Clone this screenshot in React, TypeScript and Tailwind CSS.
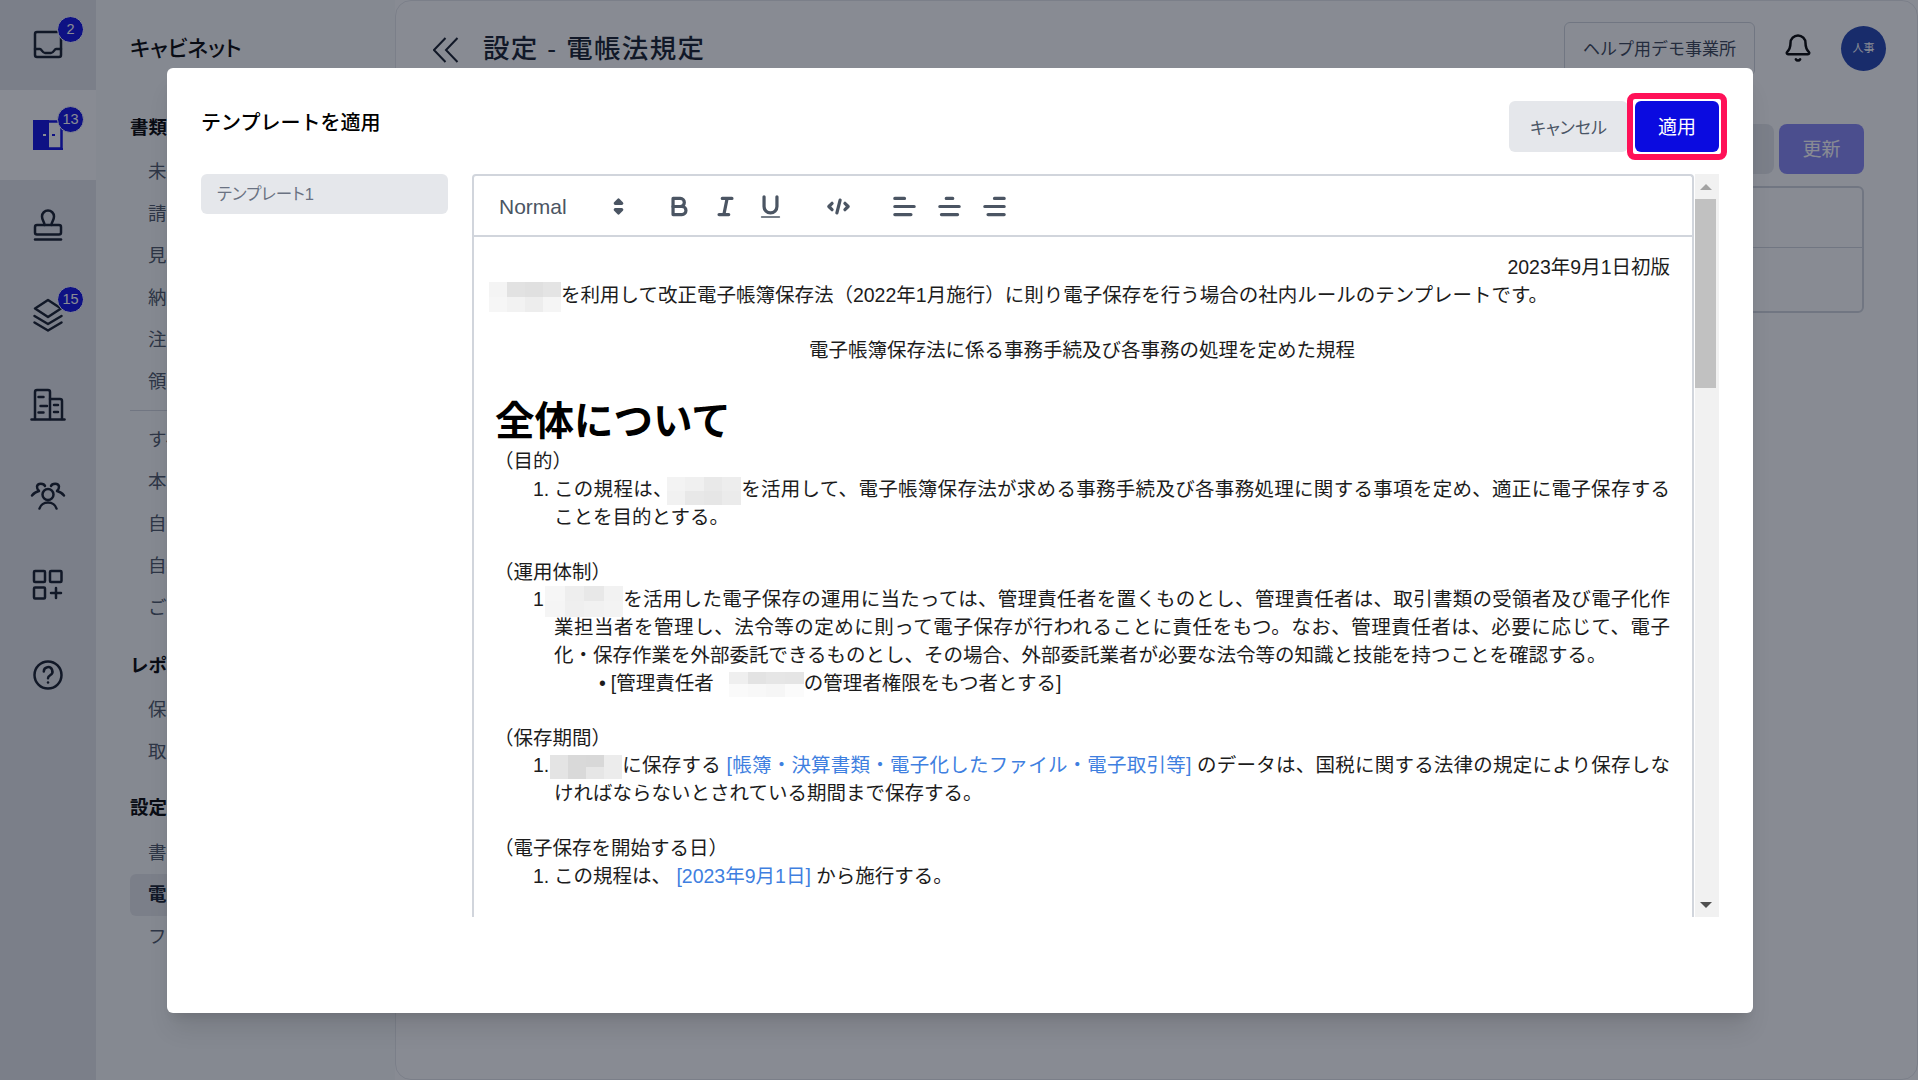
import type { ReactNode } from "react";
import { Bell } from "lucide-react";

const icon = "fill-none stroke-[#111827] stroke-[2.5] [stroke-linecap:round] [stroke-linejoin:round]";

function Inbox() {
  return (
    <svg viewBox="0 0 36 36" className={`w-9 h-9 ${icon}`}>
      <rect x="5" y="5" width="26" height="25" rx="2" />
      <path d="M5 22h5c1.5 0 2.5 4 5 4h6c2.5 0 3.5-4 5-4h5" />
    </svg>
  );
}

function Door() {
  return (
    <svg viewBox="0 0 36 36" className="w-9 h-9">
      <rect x="3" y="3" width="16" height="30" className="fill-[#0b0be0]" />
      <path d="M19 4.5h12.5v27H19" className="fill-none stroke-[#0b0be0] stroke-[2.5]" />
      <rect x="3" y="31" width="30" height="2" className="fill-[#0b0be0]" />
      <rect x="13" y="17" width="3" height="2" className="fill-white" />
      <rect x="22" y="17" width="3" height="2" className="fill-[#0b0be0]" />
    </svg>
  );
}

function StampIcon() {
  return (
    <svg viewBox="0 0 36 36" className={`w-9 h-9 ${icon}`}>
      <path d="M14.5 18c0-3.500-2.500-4.500-2.500-8.500a6 6 0 0 1 12 0c0 4-2.500 5-2.500 8.500" />
      <rect x="5" y="18" width="26" height="9.500" rx="2" />
      <path d="M5 32.500h26" />
    </svg>
  );
}

function LayersIcon() {
  return (
    <svg viewBox="0 0 36 36" className={`w-9 h-9 ${icon}`}>
      <path d="M18 3l13 8.500-13 8.500-13-8.500z" />
      <path d="M4.500 19l13.500 8 13.500-8" />
      <path d="M4.500 25.500l13.500 8 13.500-8" />
    </svg>
  );
}

function BuildingIcon() {
  return (
    <svg viewBox="0 0 36 36" className={`w-9 h-9 ${icon}`}>
      <path d="M1.500 32.500h33" />
      <path d="M5 32V5a2 2 0 0 1 2-2h11a2 2 0 0 1 2 2v27" />
      <path d="M20 12h10a2 2 0 0 1 2 2v18" />
      <path d="M8.500 10h5M10.500 19h6.500M8.500 25.500h5M24 18h4M24 25h4" />
    </svg>
  );
}

function UsersIcon() {
  return (
    <svg viewBox="0 0 36 36" className={`w-9 h-9 ${icon}`}>
      <circle cx="18" cy="17.500" r="5.500" />
      <path d="M9.500 31.500c1-3.500 4.500-6 8.500-6s7.500 2.500 8.500 6" />
      <path d="M15 9c-1-3-7.500-3.500-8 .5-.2 1.800.8 3.300 2 4.500-2.500.5-5 2-7 4.500" />
      <path d="M21 9c1-3 7.500-3.500 8 .5.2 1.800-.8 3.300-2 4.500 2.500.5 5 2 7 4.500" />
    </svg>
  );
}

function GridPlusIcon() {
  return (
    <svg viewBox="0 0 36 36" className={`w-9 h-9 ${icon}`}>
      <rect x="4" y="4" width="11" height="11" rx="1" />
      <rect x="20" y="4" width="11.500" height="11" rx="1" />
      <rect x="4" y="20.500" width="11" height="11" rx="1" />
      <path d="M26 21v10M21 26h10" />
    </svg>
  );
}

function HelpIcon() {
  return (
    <svg viewBox="0 0 36 36" className={`w-9 h-9 ${icon}`}>
      <circle cx="18" cy="18" r="13.500" />
      <path d="M13.800 14.500a4.300 4.300 0 1 1 6.400 3.700c-1.500.9-2.200 1.500-2.200 3" />
      <path d="M18 25.500v.1" />
    </svg>
  );
}

const railItems = [
  { node: <Inbox />, badge: "2" },
  { node: <Door />, badge: "13", active: true },
  { node: <StampIcon /> },
  { node: <LayersIcon />, badge: "15" },
  { node: <BuildingIcon /> },
  { node: <UsersIcon /> },
  { node: <GridPlusIcon /> },
  { node: <HelpIcon /> },
];

function Rail() {
  return (
    <div className="w-24 shrink-0 h-full bg-gray-200">
      {railItems.map((item, i) => (
        <div key={i} className={`h-[90px] flex items-center justify-center ${item.active ? "bg-white" : ""}`}>
          <div className="relative w-9 h-9">
            {item.node}
            {item.badge && (
              <span className="absolute left-[27px] -top-[11px] w-[27px] h-[27px] rounded-full bg-[#0b0be0] border border-white flex items-center justify-center text-white text-[14.500px]">
                {item.badge}
              </span>
            )}
          </div>
        </div>
      ))}
    </div>
  );
}

function CabItem({ children, active }: { children: ReactNode; active?: boolean }) {
  return (
    <div className={`h-[42px] flex items-center pl-[18px] text-[18.500px] rounded-md ${active ? "bg-gray-200 text-gray-900 font-bold" : "text-gray-600"}`}>
      {children}
    </div>
  );
}

function CabHead({ children, className }: { children: ReactNode; className: string }) {
  return <div className={`h-10 flex items-center text-[18.500px] font-bold text-black ${className}`}>{children}</div>;
}

function Cabinet() {
  return (
    <div className="w-[299px] shrink-0 h-full bg-gray-50 pt-6 pl-[34px] pr-4">
      <div className="h-12 pt-[2px] flex items-center text-[21.500px] font-medium text-black [font-feature-settings:'palt']">キャビネット</div>
      <CabHead className="mt-9">書類</CabHead>
      <div className="mt-[3px]">
        {["未処理", "請求書", "見積書", "納品書", "注文書", "領収書"].map((t) => (
          <CabItem key={t}>{t}</CabItem>
        ))}
      </div>
      <div className="border-t border-gray-300 mt-[7px] mb-2" />
      {["すべて", "本部", "自分", "自社", "ごみ箱"].map((t) => (
        <CabItem key={t}>{t}</CabItem>
      ))}
      <CabHead className="mt-[17px]">レポート</CabHead>
      <div className="mt-[3px]">
        <CabItem>保存状況</CabItem>
        <CabItem>取引先</CabItem>
      </div>
      <CabHead className="mt-[15px]">設定</CabHead>
      <div className="mt-1">
        <CabItem>書類種別</CabItem>
        <CabItem active>電帳法規定</CabItem>
        <CabItem>ファイル</CabItem>
      </div>
    </div>
  );
}

function MainPanel() {
  return (
    <div className="flex-1 min-w-0 h-full bg-white rounded-2xl border border-gray-200 pr-[31px]">
      <div className="h-[94px] flex items-center justify-between pl-[37px]">
        <div className="flex items-center gap-[24px] pt-[3px]">
          <svg viewBox="0 0 26 26" className="w-[26px] h-[26px] fill-none stroke-[#111827] stroke-[2]">
            <path d="M12.500 1L1 13l11.500 12M24.500 1L13 13l11.500 12" />
          </svg>
          <h1 className="text-[26.500px] font-medium tracking-[0.05em] text-gray-900">設定 - 電帳法規定</h1>
        </div>
        <div className="flex items-center gap-7">
          <div className="h-[54px] mt-[2px] px-[18px] pt-[2px] flex items-center border border-gray-300 rounded-md text-[17px] text-gray-700">ヘルプ用デモ事業所</div>
          <Bell size={30} strokeWidth={2} className="text-black" />
          <div className="w-[45px] h-[45px] rounded-full bg-[#1e40af] flex items-center justify-center text-white text-[11px]">人事</div>
        </div>
      </div>
      <div className="pr-[22px] pt-[29px]">
        <div className="flex justify-end gap-[5px]">
          <div className="w-[120px] h-[50px] rounded-lg bg-gray-200" />
          <div className="w-[85px] h-[50px] pt-[2px] rounded-lg bg-[#8585f5] flex items-center justify-center text-white text-[19px]">更新</div>
        </div>
        <div className="mt-3 h-[127px] border-2 border-gray-300 rounded-md">
          <div className="h-[60px] border-b border-gray-300" />
        </div>
      </div>
    </div>
  );
}

function QlIcon({ children }: { children: ReactNode }) {
  return (
    <svg viewBox="0 0 18 18" className="w-[29px] h-[29px] fill-none stroke-[#4b5563] stroke-2 [stroke-linecap:round] [stroke-linejoin:round]">
      {children}
    </svg>
  );
}

function Toolbar() {
  return (
    <div className="h-[61px] shrink-0 border-b-2 border-gray-300 flex items-center pl-[25px] pt-[2px]">
      <div className="w-[105px] text-[21px] text-[#4b5563]">Normal</div>
      <QlIcon>
        <polygon points="7 11 9 13 11 11 7 11" />
        <polygon points="7 7 9 5 11 7 7 7" />
      </QlIcon>
      <div className="ml-[32px] flex gap-[16.500px]">
        <QlIcon>
          <path d="M5,4H9.5A2.5,2.5,0,0,1,12,6.500v0A2.5,2.500,0,0,1,9.5,9H5V4Z" />
          <path d="M5,9h5.500A2.500,2.500,0,0,1,13,11.500v0A2.500,2.500,0,0,1,10.500,14H5V9Z" />
        </QlIcon>
        <QlIcon>
          <path d="M7 4h6M5 14h6M8 14l2-10" />
        </QlIcon>
        <QlIcon>
          <path d="M5,3V9a4,4,0,0,0,4,4h0a4,4,0,0,0,4-4V3" />
          <rect x="3" y="15" width="12" height="1" rx=".5" className="fill-[#4b5563] stroke-none" />
        </QlIcon>
      </div>
      <div className="ml-[39px]">
        <QlIcon>
          <path d="M5 7L3 9l2 2M13 7l2 2-2 2M10 5L8 13" />
        </QlIcon>
      </div>
      <div className="ml-[37px] flex gap-4">
        <QlIcon>
          <path d="M3 9h12M3 14h10M3 4h6" />
        </QlIcon>
        <QlIcon>
          <path d="M3 9h12M14 14H4M11 4H7" />
        </QlIcon>
        <QlIcon>
          <path d="M15 9H3M15 14H5M15 4H9" />
        </QlIcon>
      </div>
    </div>
  );
}

// 個人情報のモザイク部分
function Mosaic({ className, cells }: { className: string; cells: string[] }) {
  return (
    <span className={`inline-grid grid-cols-4 grid-rows-2 align-middle -my-2 ${className}`}>
      {cells.map((c, i) => (
        <span key={i} className={c} />
      ))}
    </span>
  );
}

function Step({ children }: { children: ReactNode }) {
  return (
    <div className="flex pl-[44px]">
      <span className="w-[21px] shrink-0">1.</span>
      <div className="flex-1 min-w-0 text-justify">{children}</div>
    </div>
  );
}

const Link = ({ children }: { children: ReactNode }) => <span className="text-[#3f7fe0]">{children}</span>;

function Doc() {
  return (
    <div className="flex-1 overflow-hidden pt-[17px] pl-[15px] pr-[22px] text-[19.500px] leading-[27.700px] text-[#1c1c1c]">
      <div className="text-right">2023年9月1日初版</div>
      <div>
        <Mosaic className="w-[72px] h-[30px]" cells={["bg-[#f4f4f4]", "bg-[#e2e2e2]", "bg-[#e0e0e0]", "bg-[#e4e4e4]", "bg-[#f6f6f6]", "bg-[#f2f2f2]", "bg-[#ededed]", "bg-[#f5f5f5]"]} />
        を利用して改正電子帳簿保存法（2022年1月施行）に則り電子保存を行う場合の社内ルールのテンプレートです。
      </div>
      <div className="h-7" />
      <div className="text-center pl-[5px]">電子帳簿保存法に係る事務手続及び各事務の処理を定めた規程</div>
      <h2 className="mt-[29px] pl-[6px] text-[39.500px] leading-[54px] font-bold text-black">全体について</h2>
      <div className="pl-[5px]">（目的）</div>
      <Step>
        この規程は、
        <Mosaic className="w-[74px] h-[28px] -ml-[6px]" cells={["bg-[#f3f3f3]", "bg-[#f0f0f0]", "bg-[#e9e9e9]", "bg-[#ededed]", "bg-[#f1f1f1]", "bg-[#e8e8e8]", "bg-[#e6e6e6]", "bg-[#ebebeb]"]} />
        を活用して、電子帳簿保存法が求める事務手続及び各事務処理に関する事項を定め、適正に電子保存することを目的とする。
      </Step>
      <div className="h-[27.500px]" />
      <div className="pl-[5px]">（運用体制）</div>
      <Step>
        <Mosaic className="w-[78px] h-[31px] -ml-[9px]" cells={["bg-[#f6f6f6]", "bg-[#eeeeee]", "bg-[#e8e8e8]", "bg-[#f2f2f2]", "bg-[#f5f5f5]", "bg-[#efefef]", "bg-[#f1f1f1]", "bg-[#f3f3f3]"]} />
        を活用した電子保存の運用に当たっては、管理責任者を置くものとし、管理責任者は、取引書類の受領者及び電子化作業担当者を管理し、法令等の定めに則って電子保存が行われることに責任をもつ。なお、管理責任者は、必要に応じて、電子化・保存作業を外部委託できるものとし、その場合、外部委託業者が必要な法令等の知識と技能を持つことを確認する。
      </Step>
      <div className="pl-[110px]">
        •<span className="ml-[5px]">[管理責任者</span>
        <Mosaic className="w-[75px] h-[25px] ml-[15px]" cells={["bg-[#efefef]", "bg-[#e3e3e3]", "bg-[#e6e6e6]", "bg-[#e5e5e5]", "bg-[#fafafa]", "bg-[#f8f8f8]", "bg-[#f6f6f6]", "bg-[#fbfbfb]"]} />
        の管理者権限をもつ者とする]
      </div>
      <div className="h-[27.500px]" />
      <div className="pl-[5px]">（保存期間）</div>
      <Step>
        <Mosaic className="w-[72px] h-[24px] -ml-[4px]" cells={["bg-[#e4e4e4]", "bg-[#d9d9d9]", "bg-[#d8d8d8]", "bg-[#ececec]", "bg-[#e4e4e4]", "bg-[#d9d9d9]", "bg-[#e6e6e6]", "bg-[#ececec]"]} />
        に保存する <Link>[帳簿・決算書類・電子化したファイル・電子取引等]</Link> のデータは、国税に関する法律の規定により保存しなければならないとされている期間まで保存する。
      </Step>
      <div className="h-[27.500px]" />
      <div className="pl-[5px]">（電子保存を開始する日）</div>
      <Step>
        この規程は、 <Link>[2023年9月1日]</Link> から施行する。
      </Step>
    </div>
  );
}

function Scrollbar() {
  return (
    <div className="w-6 ml-[1px] shrink-0 bg-[#f1f1f1] flex flex-col items-start">
      <div className="h-[25px] w-[21px] flex items-center justify-center">
        <div className="w-0 h-0 border-x-[6px] border-x-transparent border-b-[6px] border-b-[#a3a3a3]" />
      </div>
      <div className="w-[21px] h-[189px] bg-[#c1c1c1]" />
      <div className="mt-auto h-[25px] w-[21px] flex items-center justify-center">
        <div className="w-0 h-0 border-x-[6px] border-x-transparent border-t-[6px] border-t-[#505050]" />
      </div>
    </div>
  );
}

function Modal() {
  return (
    <div className="ml-[167px] mt-[68px] w-[1586px] h-[945px] bg-white rounded-md shadow-xl pl-[34px] pr-[34px] pt-[33px]">
      <div className="flex justify-between">
        <h2 className="mt-[9px] text-[20px] leading-[26px] font-medium text-black">テンプレートを適用</h2>
        <div className="flex gap-[7px]">
          <button className="w-[119px] h-[51px] pt-[5px] rounded-md bg-gray-200 text-gray-600 text-[17px] [font-feature-settings:'palt']">キャンセル</button>
          <div className="relative">
            <button className="w-[84px] h-[51px] pt-[3px] rounded-md bg-[#0b0be0] text-white text-[19px]">適用</button>
            <span className="absolute -inset-[8px] border-[6px] border-[#ff1158] rounded-lg" />
          </div>
        </div>
      </div>
      <div className="mt-[22px] flex h-[743px]">
        <div className="w-[247px] shrink-0">
          <div className="h-10 pt-[1px] rounded-md bg-gray-200 flex items-center px-4 text-[16.500px] text-gray-500 [font-feature-settings:'palt']">テンプレート1</div>
        </div>
        <div className="ml-6 flex-1 min-w-0 flex flex-col border-x-2 border-t-2 border-gray-300 rounded-t-sm">
          <Toolbar />
          <Doc />
        </div>
        <Scrollbar />
      </div>
    </div>
  );
}

export default function App() {
  return (
    <div className="relative h-screen overflow-hidden flex font-['Liberation_Sans','Noto_Sans_CJK_JP',sans-serif]">
      <Rail />
      <Cabinet />
      <MainPanel />
      <div className="absolute inset-0 bg-[#111827]/50">
        <Modal />
      </div>
    </div>
  );
}
